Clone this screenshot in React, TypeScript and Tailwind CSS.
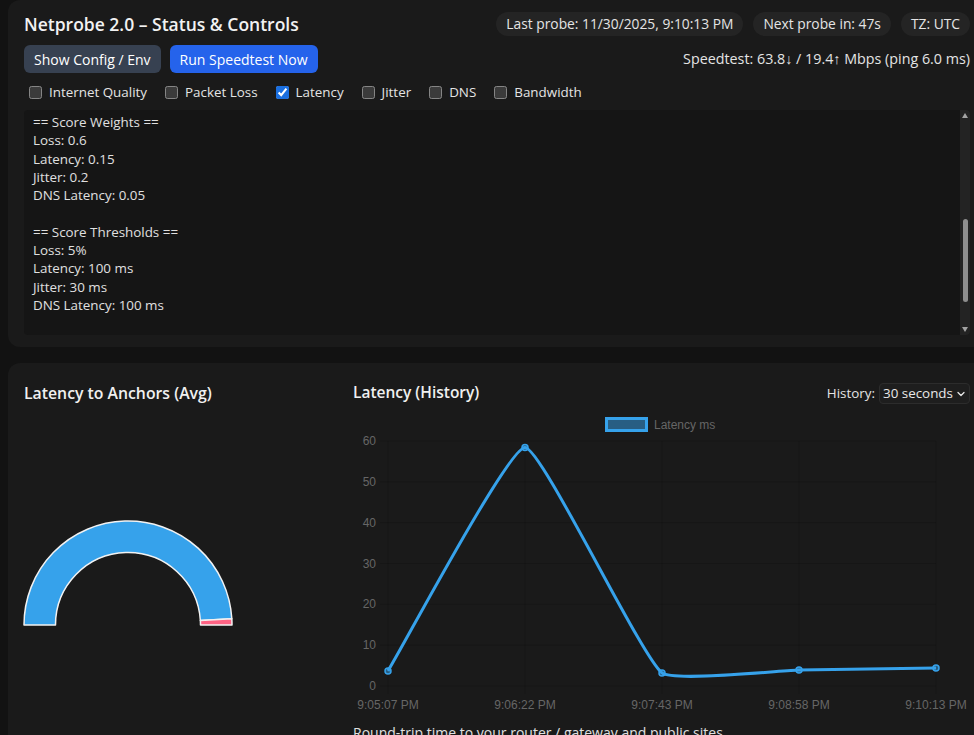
import React from 'react';
import { ChevronDown } from 'lucide-react';

const filters = [
  { label: 'Internet Quality', checked: false },
  { label: 'Packet Loss', checked: false },
  { label: 'Latency', checked: true },
  { label: 'Jitter', checked: false },
  { label: 'DNS', checked: false },
  { label: 'Bandwidth', checked: false },
];

const configText = [
  '== Score Weights ==',
  'Loss: 0.6',
  'Latency: 0.15',
  'Jitter: 0.2',
  'DNS Latency: 0.05',
  '',
  '== Score Thresholds ==',
  'Loss: 5%',
  'Latency: 100 ms',
  'Jitter: 30 ms',
  'DNS Latency: 100 ms',
].join('\n');

const history = [
  { t: '9:05:07 PM', v: 3.7 },
  { t: '9:06:22 PM', v: 58.4 },
  { t: '9:07:43 PM', v: 3.2 },
  { t: '9:08:58 PM', v: 3.9 },
  { t: '9:10:13 PM', v: 4.4 },
];

// chart geometry (svg local px)
const X0 = 35;
const X1 = 583;
const Y0 = 278;
const PX_PER_UNIT = 245 / 60;
const TENSION = 0.12;

const sx = (i: number) => X0 + (i * (X1 - X0)) / (history.length - 1);
const sy = (v: number) => Y0 - v * PX_PER_UNIT;

function linePath() {
  const pts = history.map((d, i) => ({ x: sx(i), y: sy(d.v) }));
  const ctrl = pts.map((p, i) => {
    const prev = pts[Math.max(0, i - 1)];
    const next = pts[Math.min(pts.length - 1, i + 1)];
    const d01 = Math.hypot(p.x - prev.x, p.y - prev.y);
    const d12 = Math.hypot(next.x - p.x, next.y - p.y);
    const s01 = d01 / (d01 + d12 || 1);
    const s12 = d12 / (d01 + d12 || 1);
    const fa = TENSION * s01;
    const fb = TENSION * s12;
    return {
      px: p.x - fa * (next.x - prev.x),
      py: p.y - fa * (next.y - prev.y),
      nx: p.x + fb * (next.x - prev.x),
      ny: p.y + fb * (next.y - prev.y),
    };
  });
  let d = `M${pts[0].x},${pts[0].y}`;
  for (let i = 1; i < pts.length; i++) {
    d += ` C${ctrl[i - 1].nx},${ctrl[i - 1].ny} ${ctrl[i].px},${ctrl[i].py} ${pts[i].x},${pts[i].y}`;
  }
  return d;
}

const HistoryChart = () => {
  const ticks = [0, 10, 20, 30, 40, 50, 60];
  return (
    <svg width="617" height="310" className="block" fontFamily="'Liberation Sans', Arial, sans-serif">
      {/* legend */}
      <rect x="253.5" y="10.5" width="40" height="12" fill="rgba(54,162,235,0.5)" stroke="#36a2eb" strokeWidth="3" />
      <text x="301" y="20.5" fontSize="12" fill="#666">Latency ms</text>

      {/* grid */}
      {ticks.map((t) => (
        <g key={t}>
          <line x1={X0 - 8} x2={X1} y1={sy(t)} y2={sy(t)} stroke="rgba(0,0,0,0.14)" />
          <text x="23" y={sy(t) + 4} fontSize="12" fill="#666" textAnchor="end">{t}</text>
        </g>
      ))}
      {history.map((d, i) => (
        <g key={d.t}>
          <line x1={sx(i)} x2={sx(i)} y1={sy(60)} y2={Y0 + 8} stroke="rgba(0,0,0,0.14)" />
          <text x={sx(i)} y={Y0 + 23} fontSize="12" fill="#666" textAnchor="middle">{d.t}</text>
        </g>
      ))}

      <path d={linePath()} fill="none" stroke="#36a2eb" strokeWidth="3" />
      {history.map((d, i) => (
        <circle key={d.t} cx={sx(i)} cy={sy(d.v)} r="3" fill="rgba(54,162,235,0.5)" stroke="#36a2eb" strokeWidth="1.5" />
      ))}
    </svg>
  );
};

const Gauge = () => {
  const cx = 106;
  const cy = 105;
  const ro = 104;
  const ri = 72.5;
  const split = (3.5 * Math.PI) / 180;
  const ox = cx + ro * Math.cos(split);
  const oy = cy - ro * Math.sin(split);
  const ix = cx + ri * Math.cos(split);
  const iy = cy - ri * Math.sin(split);
  const blue = `M${cx - ro},${cy} A${ro},${ro} 0 0 1 ${ox},${oy} L${ix},${iy} A${ri},${ri} 0 0 0 ${cx - ri},${cy} Z`;
  const pink = `M${ox},${oy} A${ro},${ro} 0 0 1 ${cx + ro},${cy} L${cx + ri},${cy} A${ri},${ri} 0 0 0 ${ix},${iy} Z`;
  return (
    <svg width="212" height="108" className="block">
      <path d={blue} fill="#36a2eb" stroke="#f2f2f2" strokeWidth="1.5" strokeLinejoin="round" />
      <path d={pink} fill="#ff6384" stroke="#f2f2f2" strokeWidth="1.5" strokeLinejoin="round" />
    </svg>
  );
};

export default function App() {
  return (
    <div className="h-screen w-full overflow-hidden bg-[#121212] scheme-dark font-['Open_Sans','Noto_Sans',sans-serif] text-[#e4e4e4]">
      <div className="w-[994px] px-2 flex flex-col gap-4">
        {/* status & controls */}
        <section className="rounded-xl bg-[#1a1a1a] px-4 pt-3 pb-3">
          <div className="flex items-center justify-between h-6">
            <h1 className="text-[17.5px] font-semibold text-[#f2f2f2]">Netprobe 2.0 – Status &amp; Controls</h1>
            <div className="flex gap-2.5 text-[13.8px]">
              <span className="rounded-full bg-[#242424] px-2.5 leading-6">Last probe: 11/30/2025, 9:10:13 PM</span>
              <span className="rounded-full bg-[#242424] px-2.5 leading-6">Next probe in: 47s</span>
              <span className="rounded-full bg-[#242424] px-2.5 leading-6">TZ: UTC</span>
            </div>
          </div>

          <div className="mt-[9px] flex items-center justify-between">
            <div className="flex gap-[9px] text-[14px]">
              <button className="h-7 rounded-md bg-[#374151] px-2.5 text-white">Show Config / Env</button>
              <button className="h-7 rounded-md bg-[#2563eb] px-2.5 text-white">Run Speedtest Now</button>
            </div>
            <div className="text-[14.3px]">Speedtest: 63.8↓ / 19.4↑ Mbps (ping 6.0 ms)</div>
          </div>

          <div className="mt-[9px] flex h-5 items-center gap-[18px] pl-[5px] text-[13.4px]">
            {filters.map((f) => (
              <label key={f.label} className="flex items-center gap-[7px]">
                <input type="checkbox" defaultChecked={f.checked} className="size-[13px] accent-[#1a6fe0]" />
                <span>{f.label}</span>
              </label>
            ))}
          </div>

          <div className="mt-2 flex h-[225px] overflow-hidden rounded bg-[#151515]">
            <pre className="flex-1 overflow-hidden whitespace-pre pl-[9px] pt-[3px] font-['Open_Sans','Noto_Sans',sans-serif] text-[13.4px] leading-[18.3px] text-[#e0e0e0]">
              {configText}
            </pre>
            <div className="flex w-[10px] flex-col items-center bg-[#232323] py-[3px]">
              <svg width="6" height="5" className="block"><polygon points="3,0 6,5 0,5" fill="#a3a3a3" /></svg>
              <div className="mt-[101px] h-[83px] w-[5px] rounded-full bg-[#8e8e8e]" />
              <div className="flex-1" />
              <svg width="6" height="5" className="block"><polygon points="0,0 6,0 3,5" fill="#a3a3a3" /></svg>
            </div>
          </div>
        </section>

        {/* latency */}
        <section className="grid grid-cols-[305px_1fr] gap-6 rounded-xl bg-[#1a1a1a] px-4 pt-[19px] pb-10">
          <div>
            <h2 className="text-[15.8px] font-semibold leading-[22px] text-[#f0f0f0]">Latency to Anchors (Avg)</h2>
            <div className="ml-[-2px] mt-[116px]">
              <Gauge />
            </div>
          </div>

          <div>
            <div className="flex h-[22px] items-center justify-between">
              <h2 className="text-[15.5px] font-semibold text-[#f0f0f0]">Latency (History)</h2>
              <div className="flex items-center gap-1 text-[13.4px]">
                <span>History:</span>
                <div className="relative">
                  <select defaultValue="30s" className="h-[21px] appearance-none rounded border border-[#2c2c2c] bg-[#1e1e1e] pl-[3px] pr-[16px] text-[13.4px] leading-[19px] text-[#e8e8e8]">
                    <option value="30s">30 seconds</option>
                    <option value="5m">5 minutes</option>
                    <option value="1h">1 hour</option>
                  </select>
                  <ChevronDown size={12} strokeWidth={2.5} className="pointer-events-none absolute right-[3px] top-[5px] text-[#e8e8e8]" />
                </div>
              </div>
            </div>
            <div className="mt-1">
              <HistoryChart />
            </div>
            <p className="mt-1 text-[14px] text-[#e0e0e0]">Round-trip time to your router / gateway and public sites</p>
          </div>
        </section>
      </div>
    </div>
  );
}
